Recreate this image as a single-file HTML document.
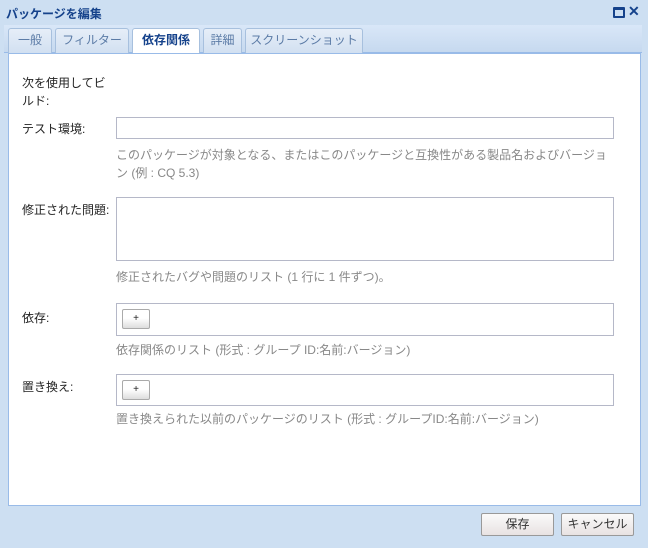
<!DOCTYPE html>
<html><head><meta charset="utf-8"><style>
*{margin:0;padding:0;box-sizing:border-box}
body{width:648px;height:548px;overflow:hidden;background:#cddff2;font-family:"Liberation Sans","Noto Sans CJK JP",sans-serif;font-size:12px;color:#222;position:relative}
.a{position:absolute}
.title{left:6px;top:5px;font-weight:bold;color:#15428b;font-size:12px}
.tabs{left:4px;top:25px;width:638px;height:28px;background:linear-gradient(#d9e7f8,#c6d9ef);border-bottom:1px solid #99bbe8}
.tab{position:absolute;top:3px;height:25px;border:1px solid #a7c0de;border-bottom:none;background:linear-gradient(#e6eef8,#d2e0f1);color:#5b7ba6;font-size:12px;text-align:center;line-height:22px;border-radius:3px 3px 0 0}
.tab.on{background:#fff;color:#15428b;font-weight:bold;height:26px}
.body{left:8px;top:53px;width:633px;height:453px;background:#fff;border:1px solid #99bbe8}
.lbl{left:22px;font-size:12px;color:#222}
.inp{left:116px;width:498px;border:1px solid #b5b8c8;background:#fff}
.hint{left:116px;color:#888;font-size:12px}
.pb{position:absolute;left:5px;top:5px;width:28px;height:20px;border:1px solid #aaa;border-radius:2px;background:linear-gradient(#fff 45%,#ddd);font-size:10px;text-align:center;line-height:18px}
.btn{top:513px;height:23px;border:1px solid #999;border-radius:2px;background:linear-gradient(#fafafa,#e8e2e2);text-align:center;line-height:21px;font-size:12px;color:#333}
</style></head><body>
<div class="a title">パッケージを編集</div>
<div class="a" style="left:613px;top:7px;width:12px;height:11px;border:2px solid #15428b;border-top-width:3px;border-radius:1px"></div>
<div class="a" style="left:628px;top:3px;color:#15428b;font-weight:bold;font-size:14px">✕</div>
<div class="a tabs">
<div class="tab" style="left:4px;width:44px">一般</div>
<div class="tab" style="left:51px;width:74px">フィルター</div>
<div class="tab on" style="left:128px;width:68px">依存関係</div>
<div class="tab" style="left:199px;width:39px">詳細</div>
<div class="tab" style="left:241px;width:118px">スクリーンショット</div>
</div>
<div class="a body"></div>
<div class="a lbl" style="top:74px;line-height:18px">次を使用してビ<br>ルド:</div>
<div class="a lbl" style="top:120px">テスト環境:</div>
<div class="a inp" style="top:117px;height:22px"></div>
<div class="a hint" style="top:146px;line-height:18px">このパッケージが対象となる、またはこのパッケージと互換性がある製品名およびバージョ<br>ン (例 : CQ 5.3)</div>
<div class="a lbl" style="top:201px">修正された問題:</div>
<div class="a inp" style="top:197px;height:64px"></div>
<div class="a hint" style="top:268px">修正されたバグや問題のリスト (1 行に 1 件ずつ)。</div>
<div class="a lbl" style="top:309px">依存:</div>
<div class="a inp" style="top:303px;height:33px"><div class="pb">+</div></div>
<div class="a hint" style="top:341px">依存関係のリスト (形式 : グループ ID:名前:バージョン)</div>
<div class="a lbl" style="top:378px">置き換え:</div>
<div class="a inp" style="top:374px;height:32px"><div class="pb">+</div></div>
<div class="a hint" style="top:410px">置き換えられた以前のパッケージのリスト (形式 : グループID:名前:バージョン)</div>
<div class="a btn" style="left:481px;width:73px">保存</div>
<div class="a btn" style="left:561px;width:73px">キャンセル</div>
</body></html>
